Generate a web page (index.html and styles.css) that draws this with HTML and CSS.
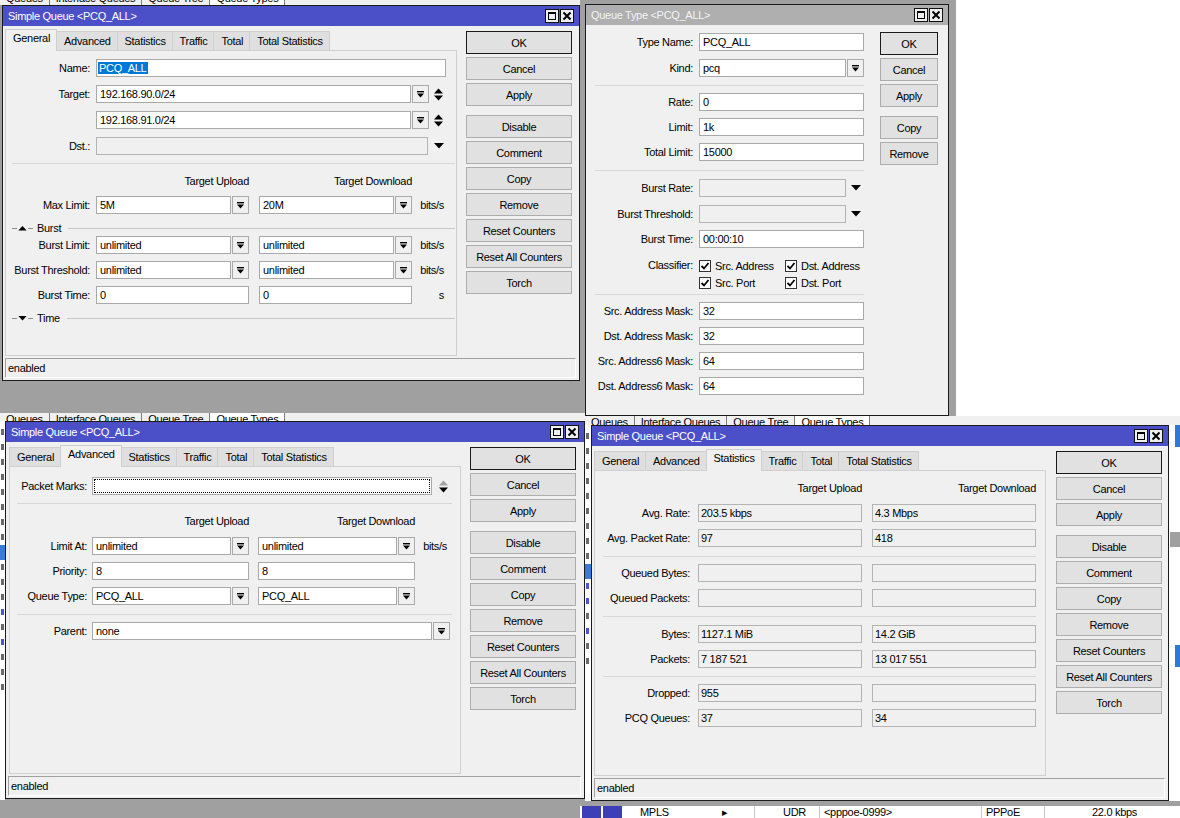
FILE: index.html
```html
<!DOCTYPE html>
<html lang="en">
<head>
  <meta charset="UTF-8">
  <meta name="viewport" content="width=device-width, initial-scale=1.0">
  <title>Simple Queue &lt;PCQ_ALL&gt;</title>
  <link rel="stylesheet" href="styles.css">
</head>
<body>
  <svg class="defs" xmlns="http://www.w3.org/2000/svg">
    <symbol id="i-dd" viewBox="0 0 7 7"><rect width="7" height="1.4"/><path d="M0 2.6h7L3.5 6.6z"/></symbol>
    <symbol id="i-ud" viewBox="0 0 9 13"><path d="M0 5.5h9L4.5 0.5z"/><path d="M0 7.5h9L4.5 12.5z"/></symbol>
    <symbol id="i-ud-off" viewBox="0 0 9 13"><path d="M0 5.5h9L4.5 0.5z" fill="#a3a3a3"/><path d="M0 7.5h9L4.5 12.5z"/></symbol>
    <symbol id="i-down" viewBox="0 0 10 6"><path d="M0 0h10L5 5.5z"/></symbol>
    <symbol id="i-up" viewBox="0 0 10 6"><path d="M0 5.5h10L5 0z"/></symbol>
    <symbol id="i-max" viewBox="0 0 12 12"><rect x="2.5" y="2.5" width="7" height="7" fill="none" stroke="#000"/><rect x="2" y="2" width="8" height="2"/></symbol>
    <symbol id="i-close" viewBox="0 0 12 12"><path d="M2.5 2.5l7 7M9.5 2.5l-7 7" stroke="#000" stroke-width="2"/></symbol>
    <symbol id="i-check" viewBox="0 0 10 10"><path d="M1.5 5l2.5 2.5 4.5-5.5" fill="none" stroke="#000" stroke-width="1.8"/></symbol>
  </svg>

  <div class="desktop">

    <!-- bits of the windows lying behind -->
    <div class="bg bg-top">
      <div class="bg-tabs"><span>Queues</span><span>Interface Queues</span><span>Queue Tree</span><span class="on">Queue Types</span></div>
    </div>
    <div class="bg bg-white"></div>
    <div class="bg bg-left-tabs">
      <div class="bg-tabs"><span>Queues</span><span>Interface Queues</span><span>Queue Tree</span><span class="on">Queue Types</span></div>
    </div>
    <div class="bg bg-left-list">
      <i class="mk"></i><i class="mk"></i><i class="mk"></i><i class="mk"></i><i class="mk"></i><i class="mk"></i><i class="mk"></i><i class="mk"></i>
      <i class="mk hl"></i><i class="mk"></i><i class="mk"></i><i class="mk"></i><i class="mk blue"></i><i class="mk"></i><i class="mk blue"></i><i class="mk"></i><i class="mk"></i><i class="mk"></i>
    </div>
    <div class="bg bg-right-tabs">
      <div class="bg-tabs"><span>Queues</span><span>Interface Queues</span><span>Queue Tree</span><span class="on">Queue Types</span></div>
    </div>
    <div class="bg bg-mid-list">
      <i class="mk"></i><i class="mk"></i><i class="mk"></i><i class="mk"></i><i class="mk"></i><i class="mk"></i><i class="mk"></i><i class="mk"></i><i class="mk"></i>
      <i class="mk hl"></i><i class="mk blue"></i><i class="mk blue"></i><i class="mk"></i><i class="mk blue"></i><i class="mk"></i><i class="mk"></i>
    </div>
    <div class="bg bg-edge">
      <div class="edge-blue"></div>
      <div class="edge-gray"></div>
      <div class="edge-blue"></div>
    </div>
    <div class="bg bg-bottom">
      <span class="side"></span><span class="side"></span>
      <span class="menu">MPLS</span><span class="arrow">&#9656;</span>
      <span class="col c-a">UDR</span><span class="col c-b">&lt;pppoe-0999&gt;</span><span class="col c-c">PPPoE</span><span class="col c-d">22.0 kbps</span>
    </div>

    <!-- Simple Queue: General -->
    <div class="window w-general">
      <div class="titlebar">
        <span class="title">Simple Queue &lt;PCQ_ALL&gt;</span>
        <span class="ctls"><span class="ctl"><svg><use href="#i-max"/></svg></span><span class="ctl"><svg><use href="#i-close"/></svg></span></span>
      </div>
      <div class="wbody">
        <div class="main">
          <div class="tabs">
            <span class="tab active">General</span><span class="tab">Advanced</span><span class="tab">Statistics</span><span class="tab">Traffic</span><span class="tab">Total</span><span class="tab">Total Statistics</span>
          </div>
          <div class="panel">
            <div class="row mt8"><span class="lbl">Name:</span><span class="inp w-name"><span class="sel">PCQ_ALL</span></span></div>
            <div class="row mt8"><span class="lbl">Target:</span><span class="cell cell-target"><span class="inp">192.168.90.0/24</span><span class="dd"><svg><use href="#i-dd"/></svg></span></span><svg class="updown"><use href="#i-ud"/></svg></div>
            <div class="row mt8"><span class="lbl"></span><span class="cell cell-target"><span class="inp">192.168.91.0/24</span><span class="dd"><svg><use href="#i-dd"/></svg></span></span><svg class="updown"><use href="#i-ud"/></svg></div>
            <div class="row mt8"><span class="lbl">Dst.:</span><span class="inp ro w-dst"></span><svg class="tri"><use href="#i-down"/></svg></div>
            <div class="sep"></div>
            <div class="row head mt11"><span class="lbl"></span><span class="cell">Target Upload</span><span class="cell">Target Download</span></div>
            <div class="row mt8"><span class="lbl">Max Limit:</span><span class="cell"><span class="inp">5M</span><span class="dd"><svg><use href="#i-dd"/></svg></span></span><span class="cell"><span class="inp">20M</span><span class="dd"><svg><use href="#i-dd"/></svg></span></span><span class="unit">bits/s</span></div>
            <div class="sect"><span class="dash"></span><svg><use href="#i-up"/></svg><span class="dash"></span><span class="name">Burst</span><span class="line"></span></div>
            <div class="row mt1"><span class="lbl">Burst Limit:</span><span class="cell"><span class="inp">unlimited</span><span class="dd"><svg><use href="#i-dd"/></svg></span></span><span class="cell"><span class="inp">unlimited</span><span class="dd"><svg><use href="#i-dd"/></svg></span></span><span class="unit">bits/s</span></div>
            <div class="row"><span class="lbl">Burst Threshold:</span><span class="cell"><span class="inp">unlimited</span><span class="dd"><svg><use href="#i-dd"/></svg></span></span><span class="cell"><span class="inp">unlimited</span><span class="dd"><svg><use href="#i-dd"/></svg></span></span><span class="unit">bits/s</span></div>
            <div class="row"><span class="lbl">Burst Time:</span><span class="cell"><span class="inp">0</span></span><span class="cell"><span class="inp">0</span></span><span class="unit">s</span></div>
            <div class="sect"><span class="dash"></span><svg><use href="#i-down"/></svg><span class="dash"></span><span class="name">Time</span><span class="line"></span></div>
          </div>
        </div>
        <div class="btncol">
          <span class="btn def">OK</span>
          <span class="btn">Cancel</span>
          <span class="btn">Apply</span>
          <span class="btn sp">Disable</span>
          <span class="btn">Comment</span>
          <span class="btn">Copy</span>
          <span class="btn">Remove</span>
          <span class="btn">Reset Counters</span>
          <span class="btn">Reset All Counters</span>
          <span class="btn">Torch</span>
        </div>
      </div>
      <div class="status">enabled</div>
    </div>

    <!-- Queue Type -->
    <div class="window w-type inactive">
      <div class="titlebar">
        <span class="title">Queue Type &lt;PCQ_ALL&gt;</span>
        <span class="ctls"><span class="ctl"><svg><use href="#i-max"/></svg></span><span class="ctl"><svg><use href="#i-close"/></svg></span></span>
      </div>
      <div class="wbody">
        <div class="form">
          <div class="row mt1"><span class="lbl">Type Name:</span><span class="cell"><span class="inp">PCQ_ALL</span></span></div>
          <div class="row mt8"><span class="lbl">Kind:</span><span class="cell"><span class="inp">pcq</span><span class="dd"><svg><use href="#i-dd"/></svg></span></span></div>
          <div class="sep"></div>
          <div class="row"><span class="lbl">Rate:</span><span class="cell"><span class="inp">0</span></span></div>
          <div class="row"><span class="lbl">Limit:</span><span class="cell"><span class="inp">1k</span></span></div>
          <div class="row"><span class="lbl">Total Limit:</span><span class="cell"><span class="inp">15000</span></span></div>
          <div class="sep mt9"></div>
          <div class="row mt8"><span class="lbl">Burst Rate:</span><span class="cell"><span class="inp ro"></span><span class="trihold"><svg class="tri"><use href="#i-down"/></svg></span></span></div>
          <div class="row mt8"><span class="lbl">Burst Threshold:</span><span class="cell"><span class="inp ro"></span><span class="trihold"><svg class="tri"><use href="#i-down"/></svg></span></span></div>
          <div class="row"><span class="lbl">Burst Time:</span><span class="cell"><span class="inp">00:00:10</span></span></div>
          <div class="row cls mt9">
            <span class="lbl">Classifier:</span>
            <div class="checks">
              <span class="chk"><i class="box"><svg><use href="#i-check"/></svg></i>Src. Address</span>
              <span class="chk"><i class="box"><svg><use href="#i-check"/></svg></i>Dst. Address</span>
              <span class="chk"><i class="box"><svg><use href="#i-check"/></svg></i>Src. Port</span>
              <span class="chk"><i class="box"><svg><use href="#i-check"/></svg></i>Dst. Port</span>
            </div>
          </div>
          <div class="sep mt3"></div>
          <div class="row"><span class="lbl">Src. Address Mask:</span><span class="cell"><span class="inp">32</span></span></div>
          <div class="row"><span class="lbl">Dst. Address Mask:</span><span class="cell"><span class="inp">32</span></span></div>
          <div class="row"><span class="lbl">Src. Address6 Mask:</span><span class="cell"><span class="inp">64</span></span></div>
          <div class="row"><span class="lbl">Dst. Address6 Mask:</span><span class="cell"><span class="inp">64</span></span></div>
        </div>
        <div class="btncol">
          <span class="btn def">OK</span>
          <span class="btn">Cancel</span>
          <span class="btn">Apply</span>
          <span class="btn sp">Copy</span>
          <span class="btn">Remove</span>
        </div>
      </div>
    </div>

    <!-- Simple Queue: Advanced -->
    <div class="window w-adv">
      <div class="titlebar">
        <span class="title">Simple Queue &lt;PCQ_ALL&gt;</span>
        <span class="ctls"><span class="ctl"><svg><use href="#i-max"/></svg></span><span class="ctl"><svg><use href="#i-close"/></svg></span></span>
      </div>
      <div class="wbody">
        <div class="main">
          <div class="tabs">
            <span class="tab">General</span><span class="tab active">Advanced</span><span class="tab">Statistics</span><span class="tab">Traffic</span><span class="tab">Total</span><span class="tab">Total Statistics</span>
          </div>
          <div class="panel">
            <div class="row mt10"><span class="lbl">Packet Marks:</span><span class="inp focus w-marks"></span><svg class="updown marks"><use href="#i-ud-off"/></svg></div>
            <div class="sep"></div>
            <div class="row head mt11"><span class="lbl"></span><span class="cell">Target Upload</span><span class="cell">Target Download</span></div>
            <div class="row mt9"><span class="lbl">Limit At:</span><span class="cell"><span class="inp">unlimited</span><span class="dd"><svg><use href="#i-dd"/></svg></span></span><span class="cell"><span class="inp">unlimited</span><span class="dd"><svg><use href="#i-dd"/></svg></span></span><span class="unit">bits/s</span></div>
            <div class="row"><span class="lbl">Priority:</span><span class="cell"><span class="inp">8</span></span><span class="cell"><span class="inp">8</span></span></div>
            <div class="row"><span class="lbl">Queue Type:</span><span class="cell"><span class="inp">PCQ_ALL</span><span class="dd"><svg><use href="#i-dd"/></svg></span></span><span class="cell"><span class="inp">PCQ_ALL</span><span class="dd"><svg><use href="#i-dd"/></svg></span></span></div>
            <div class="sep mt9"></div>
            <div class="row"><span class="lbl">Parent:</span><span class="cell cell-parent"><span class="inp">none</span><span class="dd"><svg><use href="#i-dd"/></svg></span></span></div>
          </div>
        </div>
        <div class="btncol">
          <span class="btn def">OK</span>
          <span class="btn">Cancel</span>
          <span class="btn">Apply</span>
          <span class="btn sp">Disable</span>
          <span class="btn">Comment</span>
          <span class="btn">Copy</span>
          <span class="btn">Remove</span>
          <span class="btn">Reset Counters</span>
          <span class="btn">Reset All Counters</span>
          <span class="btn">Torch</span>
        </div>
      </div>
      <div class="status">enabled</div>
    </div>

    <!-- Simple Queue: Statistics -->
    <div class="window w-stats">
      <div class="titlebar">
        <span class="title">Simple Queue &lt;PCQ_ALL&gt;</span>
        <span class="ctls"><span class="ctl"><svg><use href="#i-max"/></svg></span><span class="ctl"><svg><use href="#i-close"/></svg></span></span>
      </div>
      <div class="wbody">
        <div class="main">
          <div class="tabs">
            <span class="tab">General</span><span class="tab">Advanced</span><span class="tab active">Statistics</span><span class="tab">Traffic</span><span class="tab">Total</span><span class="tab">Total Statistics</span>
          </div>
          <div class="panel">
            <div class="row head mt11"><span class="lbl"></span><span class="cell">Target Upload</span><span class="cell">Target Download</span></div>
            <div class="row mt9"><span class="lbl">Avg. Rate:</span><span class="cell"><span class="inp ro">203.5 kbps</span></span><span class="cell"><span class="inp ro">4.3 Mbps</span></span></div>
            <div class="row"><span class="lbl">Avg. Packet Rate:</span><span class="cell"><span class="inp ro">97</span></span><span class="cell"><span class="inp ro">418</span></span></div>
            <div class="sep mt9"></div>
            <div class="row"><span class="lbl">Queued Bytes:</span><span class="cell"><span class="inp ro"></span></span><span class="cell"><span class="inp ro"></span></span></div>
            <div class="row"><span class="lbl">Queued Packets:</span><span class="cell"><span class="inp ro"></span></span><span class="cell"><span class="inp ro"></span></span></div>
            <div class="sep mt9"></div>
            <div class="row mt8"><span class="lbl">Bytes:</span><span class="cell"><span class="inp ro">1127.1 MiB</span></span><span class="cell"><span class="inp ro">14.2 GiB</span></span></div>
            <div class="row"><span class="lbl">Packets:</span><span class="cell"><span class="inp ro">7 187 521</span></span><span class="cell"><span class="inp ro">13 017 551</span></span></div>
            <div class="sep"></div>
            <div class="row"><span class="lbl">Dropped:</span><span class="cell"><span class="inp ro">955</span></span><span class="cell"><span class="inp ro"></span></span></div>
            <div class="row"><span class="lbl">PCQ Queues:</span><span class="cell"><span class="inp ro">37</span></span><span class="cell"><span class="inp ro">34</span></span></div>
          </div>
        </div>
        <div class="btncol">
          <span class="btn def">OK</span>
          <span class="btn">Cancel</span>
          <span class="btn">Apply</span>
          <span class="btn sp">Disable</span>
          <span class="btn">Comment</span>
          <span class="btn">Copy</span>
          <span class="btn">Remove</span>
          <span class="btn">Reset Counters</span>
          <span class="btn">Reset All Counters</span>
          <span class="btn">Torch</span>
        </div>
      </div>
      <div class="status">enabled</div>
    </div>

  </div>
</body>
</html>
```

FILE: styles.css
```css
* {
  box-sizing: border-box;
}

html, body {
  margin: 0;
  padding: 0;
}

body {
  background: #a0a0a0;
  font-family: "Liberation Sans", Arial, sans-serif;
  font-size: 11px;
  letter-spacing: -0.3px;
  color: #000;
}

.defs {
  position: absolute;
  width: 0;
  height: 0;
}

.desktop {
  position: relative;
  width: 1180px;
  height: 818px;
  overflow: hidden;
  background: #a0a0a0;
}

/* windows lying behind the dialogs, only their edges show */
.bg {
  position: absolute;
  overflow: hidden;
  background: #fff;
}

.bg-top { left: 0; top: 0; width: 580px; height: 5px; background: #f0f0f0; }
.bg-white { left: 956px; top: 0; width: 224px; height: 421px; }
.bg-left-tabs { left: 0; top: 413px; width: 585px; height: 8px; background: #f0f0f0; }
.bg-left-list { left: 0; top: 421px; width: 5px; height: 379px; padding-top: 8px; }
.bg-right-tabs { left: 585px; top: 416px; width: 595px; height: 9px; background: #f0f0f0; }
.bg-mid-list { left: 585px; top: 425px; width: 6px; height: 376px; padding-top: 8px; }
.bg-edge { left: 1169px; top: 425px; width: 11px; height: 376px; }

.bg-tabs {
  display: flex;
  height: 13px;
  line-height: 13px;
  white-space: nowrap;
}

.bg-top .bg-tabs {
  margin-top: -8px;
}

.bg-tabs span {
  padding: 0 6px;
  border-right: 1px solid #7c7c7c;
}

.bg-tabs .on {
  background: #fff;
}

/* glyph stubs of list rows peeking out between the dialogs */
.mk {
  display: block;
  width: 3px;
  height: 6px;
  margin: 0 0 9px 1px;
  background: #6a6a6a;
}

.mk.blue { background: #4a56d8; }
.mk.hl { width: 6px; height: 15px; margin: -4px 0 4px 0; background: #3a7ad8; }

.edge-blue {
  height: 22px;
  margin-left: 6px;
  background: #2f78d6;
}

.edge-gray {
  height: 113px;
  margin: 85px 0 0 1px;
  border-top: 15px solid #a0a0a0;
  background: #fff;
}

.bg-bottom {
  left: 580px;
  top: 806px;
  width: 600px;
  height: 12px;
  display: flex;
  line-height: 12px;
  white-space: nowrap;
}

.bg-bottom .side {
  width: 19px;
  margin-left: 2px;
  background: #3c3fb8;
}

.bg-bottom .menu { margin-left: 18px; width: 82px; }
.bg-bottom .arrow { width: 12px; }
.bg-bottom .col { border-left: 1px solid #c8c8c8; padding-left: 4px; }
.bg-bottom .c-a { margin-left: 20px; width: 65px; padding-left: 28px; }
.bg-bottom .c-b { width: 162px; }
.bg-bottom .c-c { width: 63px; }
.bg-bottom .c-d { width: 125px; text-align: right; padding-right: 32px; }

/* dialog windows */
.window {
  position: absolute;
  display: flex;
  flex-direction: column;
  background: #f0f0f0;
  border: 1px solid #1b1b1b;
}

.w-general {
  left: 2px; top: 5px; width: 578px; height: 376px;
  --lw: 90px; --lp: 6px; --cw: 153px; --cg: 10px; --sl: 6px; --sr: 1px;
}

.w-type {
  left: 585px; top: 4px; width: 364px; height: 412px;
  --lw: 113px; --lp: 6px; --cw: 165px; --cg: 10px; --sl: 9px; --sr: 0px;
}

.w-adv {
  left: 5px; top: 421px; width: 580px; height: 378px;
  --lw: 82px; --lp: 5px; --cw: 157px; --cg: 9px; --sl: 7px; --sr: 8px;
}

.w-stats {
  left: 591px; top: 425px; width: 578px; height: 376px;
  --lw: 103px; --lp: 8px; --cw: 164px; --cg: 10px; --sl: 8px; --sr: 9px;
}

.titlebar {
  flex: none;
  height: 20px;
  display: flex;
  align-items: center;
  padding: 0 5px;
  background: #4c50c8;
  color: #fff;
}

.inactive .titlebar {
  background: #afafaf;
  color: #f3f3f3;
}

.title {
  flex: 1;
}

.ctls {
  display: flex;
  gap: 1px;
}

.ctl {
  width: 14px;
  height: 14px;
  border: 1px solid #111;
  background: #efefef;
  display: flex;
  align-items: center;
  justify-content: center;
}

.ctl svg {
  width: 12px;
  height: 12px;
}

.wbody {
  flex: 1;
  display: flex;
  min-height: 0;
  padding-top: 5px;
}

.w-general .wbody { padding-left: 2px; }
.w-adv .wbody { padding-left: 3px; }
.w-stats .wbody { padding-left: 2px; }
.w-type .wbody { padding-top: 7px; }

.main {
  width: 452px;
  display: flex;
  flex-direction: column;
}

.tabs {
  flex: none;
  display: flex;
  align-items: flex-end;
  height: 19px;
}

.tab {
  height: 19px;
  line-height: 18px;
  padding: 0 6px 0 7px;
  background: #dfdfdf;
  border: 1px solid #cfcfcf;
  border-bottom: none;
  margin-right: -1px;
  white-space: nowrap;
}

.tab.active {
  position: relative;
  z-index: 1;
  height: 22px;
  line-height: 17px;
  margin-bottom: -1px;
  background: #f0f0f0;
}

.panel {
  flex: 1;
  display: flex;
  flex-direction: column;
  border: 1px solid #d0d0d0;
  background: #f0f0f0;
}

.form {
  width: 278px;
  display: flex;
  flex-direction: column;
}

.btncol {
  flex: none;
  display: flex;
  flex-direction: column;
  gap: 3px;
  width: 106px;
  margin-left: 9px;
}

.w-stats .btncol { margin-left: 10px; }
.w-type .btncol { width: 58px; margin-left: 16px; }

.btn {
  flex: none;
  height: 23px;
  display: flex;
  align-items: center;
  justify-content: center;
  background: #e1e1e1;
  border: 1px solid #adadad;
  white-space: nowrap;
}

.btn.def {
  border-color: #1a1a1a;
}

.btn.sp {
  margin-top: 6px;
}

.status {
  flex: none;
  height: 20px;
  margin: 2px 3px 2px 2px;
  padding-left: 2px;
  line-height: 18px;
  border: 1px solid;
  border-color: #a0a0a0 #fff #fff #a0a0a0;
}

/* form rows */
.row {
  flex: none;
  display: flex;
  align-items: center;
  height: 18px;
  margin-top: 7px;
}

.lbl {
  flex: none;
  width: var(--lw);
  padding-right: var(--lp);
  text-align: right;
  white-space: nowrap;
}

.cell {
  flex: none;
  width: var(--cw);
  display: flex;
  gap: 1px;
}

.cell + .cell {
  margin-left: var(--cg);
}

.inp {
  flex: none;
  height: 18px;
  line-height: 16px;
  padding-left: 3px;
  border: 1px solid #a9a9a9;
  background: #fff;
  white-space: nowrap;
  overflow: hidden;
}

.cell .inp {
  flex: 1;
  min-width: 0;
}

.inp.ro {
  background: #f0f0f0;
  border-color: #b4b4b4;
}

.w-stats .inp.ro {
  padding-left: 2px;
}

.inp.focus {
  outline: 1px dotted #000;
  outline-offset: -3px;
}

.sel {
  margin-left: -2px;
  padding: 0 2px 0 1px;
  background: #0078d7;
  color: #fff;
}

.w-name { width: 350px; }
.w-dst { width: 332px; }
.w-marks { width: 340px; }
.cell-target { width: 333px; }
.cell-parent { width: 358px; }

.dd {
  flex: none;
  width: 17px;
  height: 18px;
  display: flex;
  align-items: center;
  justify-content: center;
  border: 1px solid #a9a9a9;
  background: #f0f0f0;
}

.dd svg {
  width: 7px;
  height: 7px;
}

.updown {
  flex: none;
  width: 9px;
  height: 13px;
  margin-left: 5px;
}

.updown.marks {
  margin-left: 7px;
}

.tri {
  flex: none;
  width: 10px;
  height: 6px;
  margin-left: 6px;
}

.trihold {
  flex: none;
  width: 17px;
  display: flex;
  align-items: center;
  justify-content: center;
}

.trihold .tri {
  margin-left: 0;
}

.unit {
  flex: none;
  width: 27px;
  margin-left: 5px;
  text-align: right;
}

.row.head {
  height: 13px;
  line-height: 13px;
}

.head .cell {
  justify-content: flex-end;
  white-space: nowrap;
}

.sep {
  flex: none;
  height: 1px;
  margin: 8px var(--sr) 0 var(--sl);
  background: #d7d7d7;
}

/* collapsible section headers */
.sect {
  flex: none;
  display: flex;
  align-items: center;
  height: 14px;
  margin: 7px 1px 0 6px;
}

.sect .dash {
  width: 5px;
  height: 1px;
  background: #8c8c8c;
}

.sect svg {
  width: 9px;
  height: 5px;
  margin: 0 1px;
}

.sect .name {
  margin: 0 7px 0 4px;
}

.sect .line {
  flex: 1;
  height: 1px;
  background: #c6c6c6;
}

/* classifier checkboxes */
.row.cls {
  height: 34px;
  align-items: flex-start;
}

.cls .lbl {
  line-height: 17px;
}

.checks {
  display: grid;
  grid-template-columns: 86px 86px;
  grid-auto-rows: 17px;
}

.chk {
  display: flex;
  align-items: center;
  white-space: nowrap;
}

.box {
  width: 12px;
  height: 12px;
  margin-right: 4px;
  display: flex;
  align-items: center;
  justify-content: center;
  border: 1px solid #333;
  background: #fff;
}

.box svg {
  width: 10px;
  height: 10px;
}

/* spacing tweaks */
.mt1 { margin-top: 1px; }
.mt3 { margin-top: 3px; }
.mt8 { margin-top: 8px; }
.mt9 { margin-top: 9px; }
.mt10 { margin-top: 10px; }
.mt11 { margin-top: 11px; }
```
